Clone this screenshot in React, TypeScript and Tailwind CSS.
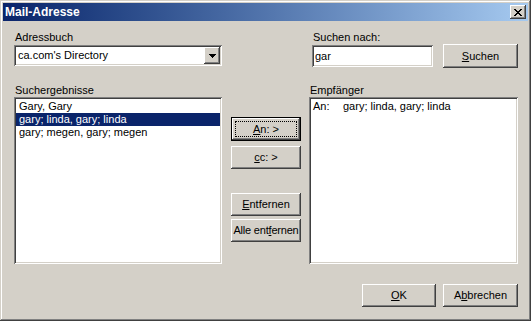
import React from "react";

const raised =
  "shadow-[inset_-1px_-1px_#404040,inset_1px_1px_#ffffff,inset_-2px_-2px_#808080,inset_2px_2px_#d4d0c8]";
const sunken =
  "shadow-[inset_1px_1px_#808080,inset_-1px_-1px_#ffffff,inset_2px_2px_#404040,inset_-2px_-2px_#d4d0c8]";

const Btn = ({
  children,
  className = "",
  isDefault = false,
}: {
  children: React.ReactNode;
  className?: string;
  isDefault?: boolean;
}) =>
  isDefault ? (
    <div className={`border border-black bg-[#d4d0c8] ${className}`}>
      <div className="h-full w-full p-[3px] shadow-[inset_-1px_-1px_#404040,inset_1px_1px_#ffffff,inset_-2px_-2px_#808080]">
        <div className="flex h-full w-full items-center justify-center border border-dotted border-black">
          {children}
        </div>
      </div>
    </div>
  ) : (
    <div className={`flex items-center justify-center bg-[#d4d0c8] ${raised} ${className}`}>
      {children}
    </div>
  );

const CloseGlyph = () => (
  <svg width="8" height="7" viewBox="0 0 8 7" shapeRendering="crispEdges">
    <g fill="#000">
      <rect x="0" y="0" width="2" height="1" />
      <rect x="6" y="0" width="2" height="1" />
      <rect x="1" y="1" width="2" height="1" />
      <rect x="5" y="1" width="2" height="1" />
      <rect x="2" y="2" width="4" height="1" />
      <rect x="3" y="3" width="2" height="1" />
      <rect x="2" y="4" width="4" height="1" />
      <rect x="1" y="5" width="2" height="1" />
      <rect x="5" y="5" width="2" height="1" />
      <rect x="0" y="6" width="2" height="1" />
      <rect x="6" y="6" width="2" height="1" />
    </g>
  </svg>
);

const ArrowGlyph = () => (
  <svg width="7" height="4" viewBox="0 0 7 4" shapeRendering="crispEdges">
    <g fill="#000">
      <rect x="0" y="0" width="7" height="1" />
      <rect x="1" y="1" width="5" height="1" />
      <rect x="2" y="2" width="3" height="1" />
      <rect x="3" y="3" width="1" height="1" />
    </g>
  </svg>
);

export default function App() {
  return (
    <div className="flex h-[321px] w-[531px] flex-col bg-[#d4d0c8] p-[3px] font-['Liberation_Sans',Arial,sans-serif] text-[11px] leading-[13px] text-black shadow-[inset_-1px_-1px_#404040,inset_1px_1px_#d4d0c8,inset_-2px_-2px_#808080,inset_2px_2px_#ffffff]">
      {/* title bar */}
      <div className="flex h-[18px] items-center justify-between bg-gradient-to-r from-[#0a246a] to-[#a6caf0] pl-[2px] pr-[2px]">
        <span className="text-[12px] font-bold text-white">Mail-Adresse</span>
        <div className={`flex h-[14px] w-[16px] items-center justify-center bg-[#d4d0c8] ${raised}`}>
          <CloseGlyph />
        </div>
      </div>

      <div className="flex flex-1 flex-col pl-[11px] pr-[10px] pt-[10px]">
        {/* row 1 */}
        <div className="flex h-[37px] items-start">
          <div className="flex w-[208px] flex-col">
            <span className="h-[13px] pl-px">Adressbuch</span>
            <div className={`mt-px flex h-[21px] items-center bg-white p-[2px] ${sunken}`}>
              <span className="flex-1 pl-[2px]">ca.com's Directory</span>
              <div className={`flex h-[17px] w-[16px] items-center justify-center bg-[#d4d0c8] ${raised}`}>
                <ArrowGlyph />
              </div>
            </div>
          </div>
          <div className="ml-[90px] flex w-[121px] flex-col">
            <span className="h-[13px] pl-px">Suchen nach:</span>
            <div className={`mt-px flex h-[22px] items-center bg-white px-[3px] ${sunken}`}>gar</div>
          </div>
          <Btn className="ml-[10px] mt-[13px] h-[24px] w-[75px]">
            <span>
              <u>S</u>uchen
            </span>
          </Btn>
        </div>

        {/* row 2 */}
        <div className="mt-[16px] flex">
          <div className="flex w-[208px] flex-col">
            <span className="h-[13px] pl-px">Suchergebnisse</span>
            <div className={`flex h-[167px] flex-col bg-white p-[2px] pt-[3px] ${sunken}`}>
              <div className="h-[13px] px-[3px]">Gary, Gary</div>
              <div className="h-[13px] bg-[#0a246a] px-[3px] text-white">gary; linda, gary; linda</div>
              <div className="h-[13px] px-[3px]">gary; megen, gary; megen</div>
            </div>
          </div>

          <div className="ml-[9px] flex w-[70px] flex-col pt-[33px]">
            <Btn isDefault className="h-[24px] w-full">
              <span>
                <u>A</u>n: &gt;
              </span>
            </Btn>
            <Btn className="mt-[5px] h-[23px] w-full">
              <span>
                <u>c</u>c: &gt;
              </span>
            </Btn>
            <Btn className="mt-[24px] h-[23px] w-full">
              <span>
                <u>E</u>ntfernen
              </span>
            </Btn>
            <Btn className="mt-[3px] h-[23px] w-full">
              <span className="tracking-[-0.2px]">
                Alle ent<u>f</u>ernen
              </span>
            </Btn>
          </div>

          <div className="ml-[8px] flex flex-1 flex-col">
            <span className="h-[13px] pl-px">Empfänger</span>
            <div className={`flex h-[167px] flex-col bg-white p-[2px] pt-[3px] ${sunken}`}>
              <div className="flex h-[13px] px-[2px]">
                <span className="w-[30px]">An:</span>
                <span>gary; linda, gary; linda</span>
              </div>
            </div>
          </div>
        </div>

        {/* row 3 */}
        <div className="mt-[20px] flex justify-end gap-[7px]">
          <Btn className="h-[23px] w-[74px]">
            <span>
              <u>O</u>K
            </span>
          </Btn>
          <Btn className="h-[23px] w-[75px]">
            <span>
              A<u>b</u>brechen
            </span>
          </Btn>
        </div>
      </div>
    </div>
  );
}
